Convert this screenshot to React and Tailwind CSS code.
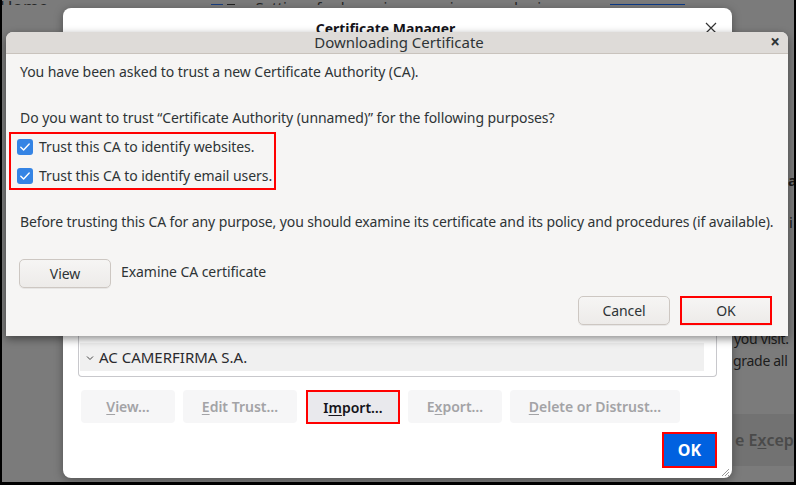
import React from "react";

function Check() {
  return (
    <span className="w-4 h-4 rounded-[3px] bg-[#3584e4] flex items-center justify-center shrink-0">
      <svg width="12" height="12" viewBox="0 0 12 12">
        <polyline points="1.8,6.2 4.6,9 10.2,3" fill="none" stroke="white" strokeWidth="1.4" strokeLinecap="round" strokeLinejoin="round" />
      </svg>
    </span>
  );
}

function GtkButton({ children, className = "" }) {
  return (
    <div className={"h-[29px] w-[92px] rounded-[5px] border border-[#cdc7c2] bg-gradient-to-b from-[#f6f5f4] to-[#edebe9] shadow-[0_1px_0_rgba(0,0,0,0.06)] flex items-center justify-center text-[14px] text-[#2e3436] " + className}>
      {children}
    </div>
  );
}

function MgrButton({ children, disabled, className = "" }) {
  return (
    <div className={"h-[33px] rounded-[4px] flex items-center justify-center text-[14px] font-semibold " + (disabled ? "bg-[#f6f6f7] text-[#a3a3a6] " : "bg-[#e9e9ed] text-[#15141a] ") + className}>
      {children}
    </div>
  );
}

export default function App() {
  return (
    <div className="w-[796px] h-[485px] relative overflow-hidden bg-[#7b7b7b] border-l-2 border-r-2 border-b-[3px] border-black font-['Noto_Sans',sans-serif]">
      {/* background page (dimmed) */}
      <div className="flex flex-col h-full">
        <div className="h-[5px] overflow-hidden flex items-end">
          <div className="flex items-end -mb-[13px] text-[17px] text-[#262626] leading-[22px] whitespace-nowrap">
            <span className="ml-[-2px]">Home</span>
            <span className="ml-[163px] w-[12px] h-[14px] bg-[#1a3f80]"></span>
            <span className="ml-[4px] w-[8px] h-[14px] bg-[#222]"></span>
            <span className="ml-[20px] text-[15px]">Settings for browsing experience and privacy</span>
            <span className="ml-[38px] w-[75px] h-[14px] bg-[#0b3a88]"></span>
          </div>
        </div>
        <div className="flex-1 flex">
          <div className="w-[731px] shrink-0"></div>
          <div className="flex-1 flex flex-col text-[14px] text-[#1c1c1c] leading-[20px] overflow-hidden whitespace-nowrap tracking-[-0.3px]">
            <div className="h-[165px]"></div>
            <div className="font-bold pl-[55px] text-[15px]">a</div>
            <div className="h-[22px]"></div>
            <div className="pl-[56px] text-[15px]">i</div>
            <div className="h-[97px]"></div>
            <div className="pl-[1px]">you visit.</div>
            <div className="pl-[0px] mt-[2px]">grade all</div>
            <div className="h-[43px]"></div>
            <div className="h-[52px] bg-[#727272] flex items-center text-[#4a4a4a] font-semibold text-[16px] pl-[2px] tracking-normal">
              e E<span className="underline underline-offset-2">x</span>ceptions…
            </div>
          </div>
        </div>
      </div>

      {/* Certificate Manager window */}
      <div className="absolute left-[61px] top-[8px] w-[669px] h-[470px] bg-white rounded-[8px] shadow-[0_2px_10px_rgba(0,0,0,0.35)] flex flex-col px-[15px]">
        <div className="h-[40px] flex items-center relative">
          <div className="flex-1 text-center pr-[12px] text-[14px] font-bold text-[#15141a]">Certificate Manager</div>
          <svg width="12" height="12" viewBox="0 0 12 12" className="mr-[0px]">
            <path d="M1 1 L11 11 M11 1 L1 11" stroke="#333" strokeWidth="1.2" />
          </svg>
        </div>
        <div className="flex-1"></div>
        <div className="h-[60px] border border-t-0 border-[#c8c8cc] rounded-b-[4px] flex flex-col justify-end pb-[5px] pl-[1px] pr-[12px]">
          <div className="h-[28px] bg-[#f0f0f0] flex items-center pl-[6px] text-[15px] text-[#2a2a2e]">
            <svg width="8" height="6" viewBox="0 0 8 6" className="mr-[5px] mt-[2px]">
              <polyline points="1,1.5 4,4.5 7,1.5" fill="none" stroke="#444" strokeWidth="1" />
            </svg>
            AC CAMERFIRMA S.A.
          </div>
        </div>
        <div className="flex gap-[8px] mt-[13px] pl-[3px]">
          <MgrButton disabled className="w-[94px]"><span><span className="underline underline-offset-2">V</span>iew…</span></MgrButton>
          <MgrButton disabled className="w-[114px]"><span><span className="underline underline-offset-2">E</span>dit Trust…</span></MgrButton>
          <MgrButton className="w-[94px] h-[34px] border-2 border-[#ff0000] rounded-none ml-[1px]"><span>I<span className="underline underline-offset-2">m</span>port…</span></MgrButton>
          <MgrButton disabled className="w-[94px]"><span>E<span className="underline underline-offset-2">x</span>port…</span></MgrButton>
          <MgrButton disabled className="w-[170px]"><span><span className="underline underline-offset-2">D</span>elete or Distrust…</span></MgrButton>
        </div>
        <div className="flex justify-end mt-[8px]">
          <div className="border-2 border-[#ff0000]">
            <div className="w-[51px] h-[32px] bg-[#0061e0] flex items-center justify-center text-white font-bold text-[16px]">OK</div>
          </div>
        </div>
        <div className="h-[10px] relative">
          <svg width="10" height="10" viewBox="0 0 10 10" className="absolute right-[-13px] bottom-[1px]">
            <path d="M9 2 L2 9 M9 5 L5 9 M9 8 L8 9" stroke="#999" strokeWidth="1" />
          </svg>
        </div>
      </div>

      {/* Downloading Certificate dialog */}
      <div className="absolute left-[4px] top-[32px] w-[782px] h-[304px] bg-[#f6f5f4] rounded-t-[7px] shadow-[0_3px_9px_rgba(0,0,0,0.45)] flex flex-col text-[#2e3436]">
        <div className="h-[22px] bg-[#dedbd8] rounded-t-[7px] border-b border-[#c9c3bd] flex items-center relative">
          <div className="flex-1 text-center text-[15px] leading-[20px] pl-[4px] -mt-[2px]">Downloading Certificate</div>
          <div className="absolute right-[8px] top-0 text-[17px] font-bold leading-[20px]">×</div>
        </div>
        <div className="flex flex-col px-[14px] text-[14px] leading-[20px] whitespace-nowrap tracking-[-0.06px]">
          <div className="mt-[8px]">You have been asked to trust a new Certificate Authority (CA).</div>
          <div className="mt-[26px]">Do you want to trust “Certificate Authority (unnamed)” for the following purposes?</div>
          <div className="ml-[-11px] mt-[4px] w-[267px] h-[58px] border-2 border-[#ff0000] flex flex-col justify-center gap-[9px] pl-[6px]">
            <div className="flex items-center gap-[6px]"><Check />Trust this CA to identify websites.</div>
            <div className="flex items-center gap-[6px]"><Check />Trust this CA to identify email users.</div>
          </div>
          <div className="mt-[22px] tracking-[-0.11px]">Before trusting this CA for any purpose, you should examine its certificate and its policy and procedures (if available).</div>
          <div className="flex items-center mt-[27px] -ml-[1px]">
            <GtkButton>View</GtkButton>
            <div className="ml-[10px] -mt-[4px]">Examine CA certificate</div>
          </div>
          <div className="flex justify-end gap-[10px] mt-[8px] pr-[2px]">
            <GtkButton>Cancel</GtkButton>
            <GtkButton className="border-2 border-[#ff0000] rounded-none">OK</GtkButton>
          </div>
        </div>
      </div>
    </div>
  );
}
